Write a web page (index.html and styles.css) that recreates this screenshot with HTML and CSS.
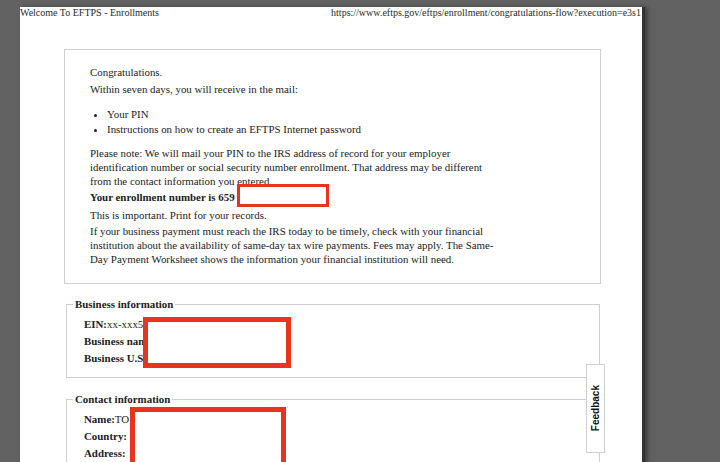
FILE: index.html
```html
<!DOCTYPE html>
<html>
<head>
<meta charset="utf-8">
<link rel="stylesheet" href="styles.css">
</head>
<body>
<div class="page">
  <div class="header">
    <span>Welcome To EFTPS - Enrollments</span>
    <span>https://www.eftps.gov/eftps/enrollment/congratulations-flow?execution=e3s1</span>
  </div>
  <div class="notice">
    <p class="p-congrats">Congratulations.</p>
    <p class="p-within">Within seven days, you will receive in the mail:</p>
    <ul class="mail-list">
      <li>Your PIN</li>
      <li>Instructions on how to create an EFTPS Internet password</li>
    </ul>
    <p class="p-note">Please note: We will mail your PIN to the IRS address of record for your employer identification number or social security number enrollment. That address may be different from the contact information you entered.</p>
    <p class="p-number"><strong>Your enrollment number is 659</strong></p>
    <p class="p-important">This is important. Print for your records.</p>
    <p class="p-wire">If your business payment must reach the IRS today to be timely, check with your financial institution about the availability of same-day tax wire payments. Fees may apply. The Same-Day Payment Worksheet shows the information your financial institution will need.</p>
  </div>
  <fieldset class="info info-business">
    <legend>Business information</legend>
    <div class="rows">
      <div class="row"><b>EIN:</b>xx-xxx5</div>
      <div class="row"><b>Business name:</b></div>
      <div class="row"><b>Business U.S. address:</b></div>
    </div>
  </fieldset>
  <fieldset class="info info-contact">
    <legend>Contact information</legend>
    <div class="rows">
      <div class="row"><b>Name:</b>TO</div>
      <div class="row"><b>Country:</b></div>
      <div class="row"><b>Address:</b></div>
    </div>
  </fieldset>
  <div class="redact redact-number"></div>
  <div class="redact redact-business"></div>
  <div class="redact redact-contact"></div>
  <div class="feedback"><span>Feedback</span></div>
</div>
</body>
</html>
```
FILE: styles.css
```css
html, body {
  margin: 0;
  padding: 0;
  height: 100%;
  overflow: hidden;
}
body {
  background: #626262;
  font-family: "Liberation Serif", "Times New Roman", serif;
  color: #222;
}
.page {
  position: relative;
  margin: 7px 0 0 20px;
  width: 622px;
  height: 460px;
  background: #fff;
  border-right: 3px solid #333;
  box-shadow: 3px 0 4px rgba(0,0,0,0.35);
  overflow: hidden;
}
.header {
  display: flex;
  justify-content: space-between;
  font-size: 10px;
  line-height: 11px;
  padding: 0 1px 0 0;
  color: #2a2a2a;
}
.notice {
  margin: 31px 0 0 44px;
  width: 510px;
  border: 1px solid #cfcfcf;
  padding: 15px 0 17px 25px;
  font-size: 10.9px;
  line-height: 14px;
}
.notice p { margin: 0; }
.p-within { margin-top: 3px !important; }
.mail-list {
  margin: 11px 0 0 0;
  padding-left: 17px;
  line-height: 15px;
}
.p-note { margin-top: 9px !important; width: 405px; }
.p-number { margin-top: 2px !important; }
.p-important { margin-top: 4px !important; }
.p-wire { margin-top: 2px !important; width: 405px; }
.info {
  margin: 13px 0 0 46px;
  width: 526px;
  border: 1px solid #cfcfcf;
  padding: 0 0 10px 6px;
  font-size: 10.9px;
  line-height: 14px;
}
.info-contact { margin-top: 14px; }
.info legend {
  padding: 0 2px;
  font-weight: bold;
}
.rows {
  padding: 5px 0 0 11px;
  line-height: 17px;
}
.row b { font-weight: bold; }
.redact {
  position: absolute;
  background: #fff;
  border: 4px solid #e8341f;
  box-sizing: border-box;
}
.redact-number { left: 217px; top: 177px; width: 92px; height: 23px; border-width: 3px; }
.redact-business { left: 123px; top: 310px; width: 148px; height: 51px; border-width: 5px; }
.redact-contact { left: 110px; top: 400px; width: 156px; height: 70px; border-width: 5px; }
.feedback {
  position: absolute;
  left: 566px;
  top: 357px;
  width: 17px;
  height: 87px;
  background: #fff;
  border: 1px solid #cfcfcf;
  display: flex;
  align-items: center;
  justify-content: center;
}
.feedback span {
  writing-mode: vertical-rl;
  transform: rotate(180deg);
  font-family: "Liberation Sans", Arial, sans-serif;
  font-weight: bold;
  font-size: 10px;
  color: #111;
}
```
